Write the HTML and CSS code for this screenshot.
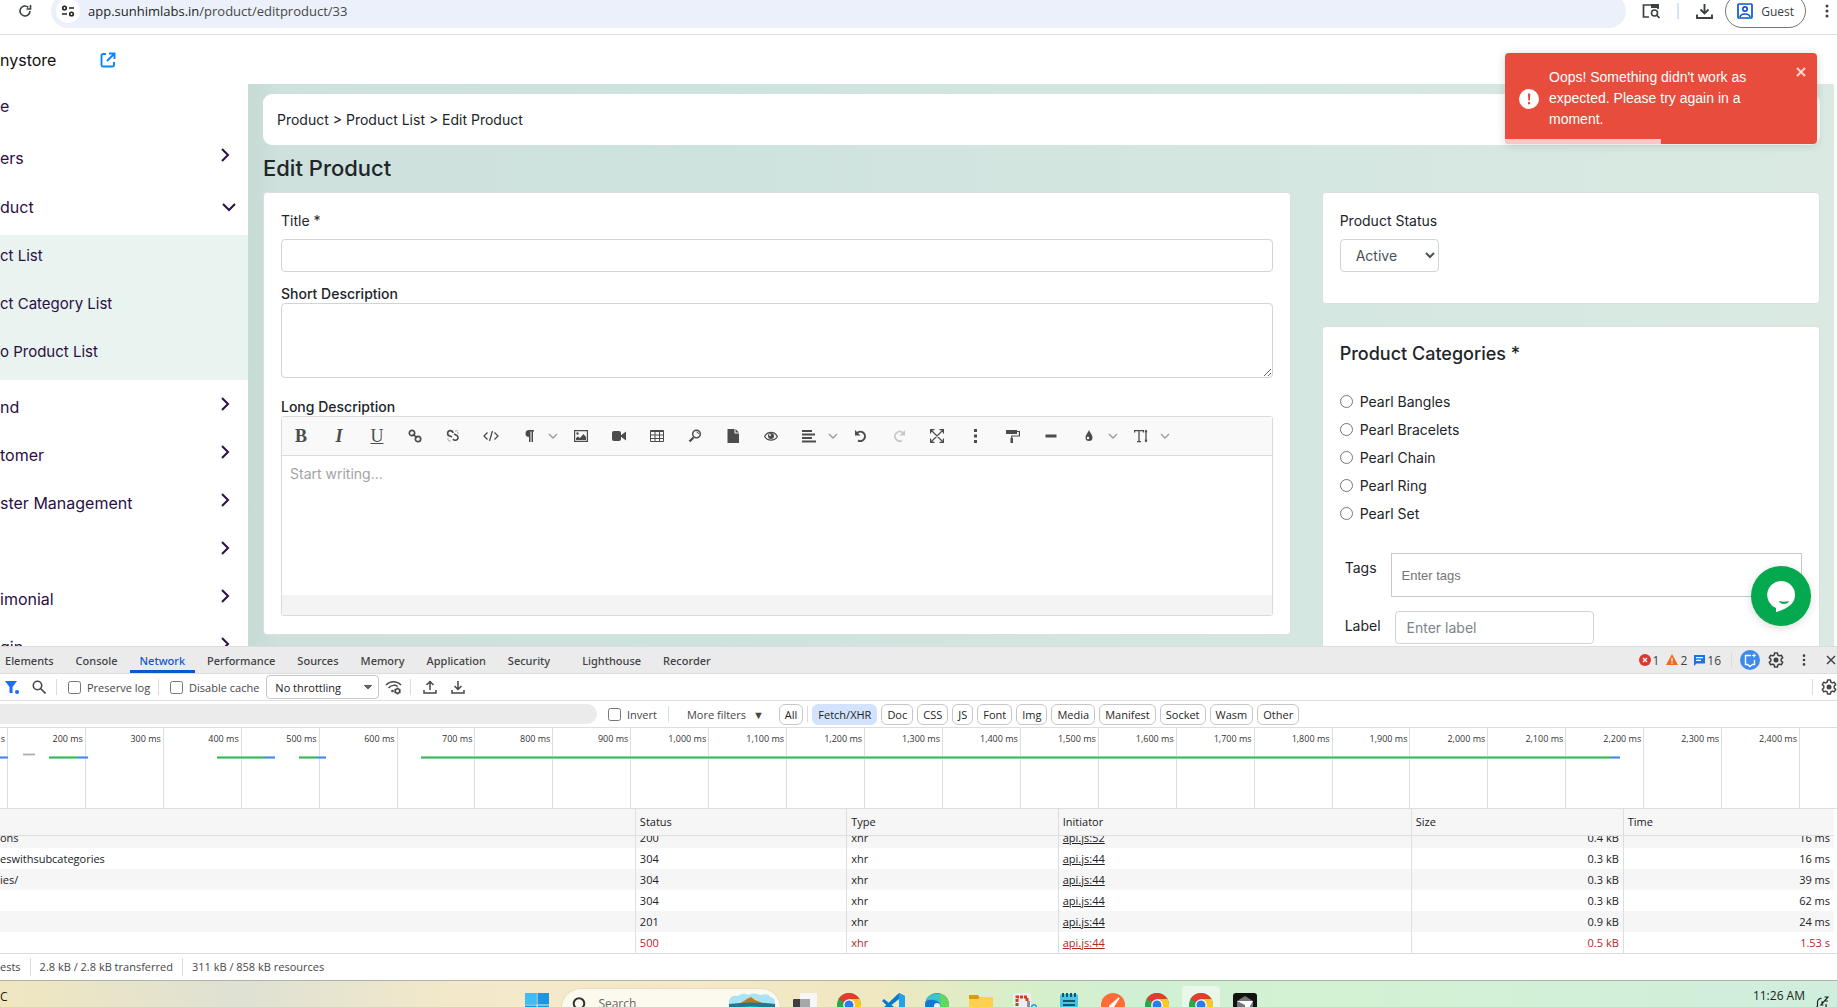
FILE: index.html
```
<!DOCTYPE html>
<html lang="en">
<head>
  <meta charset="UTF-8">
  <meta name="viewport" content="width=device-width, initial-scale=1.0">
  <title>Edit Product</title>
  <link rel="stylesheet" href="styles.css">
</head>
<body>
  <!-- Shared symbols -->
  <svg class="defs" aria-hidden="true">
    <symbol id="i-right" viewBox="0 0 10 14"><path d="M2 1l6 6-6 6" fill="none" stroke="currentColor" stroke-width="2"/></symbol>
    <symbol id="i-down" viewBox="0 0 14 10"><path d="M1 2l6 6 6-6" fill="none" stroke="currentColor" stroke-width="2"/></symbol>
    <symbol id="i-caret" viewBox="0 0 10 8"><path d="M1 2l4 4 4-4" fill="none" stroke="#999" stroke-width="1.3"/></symbol>
    <symbol id="i-dots" viewBox="0 0 16 16"><circle cx="8" cy="3" r="1.5"/><circle cx="8" cy="8" r="1.5"/><circle cx="8" cy="13" r="1.5"/></symbol>
    <symbol id="i-gear" viewBox="0 0 16 16"><path d="M6.6 1h2.8l.4 2 1.5.9 2-.7 1.4 2.4L13.200 7v2l1.500 1.400-1.400 2.400-2-.7-1.500.9-.4 2H6.600l-.4-2-1.500-.9-2 .7-1.400-2.400L2.800 9V7L1.300 5.600l1.400-2.400 2 .7L6.200 3z" fill="none" stroke="currentColor" stroke-width="1.500" stroke-linejoin="round"/><circle cx="8" cy="8" r="2.500"/></symbol>
    <symbol id="i-chrome" viewBox="0 0 24 24"><circle cx="12" cy="12" r="12" fill="#2da44e"/><path d="M12 12L1.600 6A12 12 0 0 1 22.400 6z" fill="#e33b2e"/><path d="M12 6h10.400A12 12 0 0 1 12 24z" fill="#fcc62a"/><circle cx="12" cy="12" r="5.800" fill="#fff"/><circle cx="12" cy="12" r="4.500" fill="#2b7bea"/></symbol>
  </svg>

  <div class="browser-bar">
    <button class="icon-btn reload" aria-label="Reload"><svg width="14" height="14" viewBox="0 0 14 14"><path d="M12 7a5 5 0 1 1-1.600-3.700M12.500 1v4h-4" fill="none" stroke="currentColor" stroke-width="1.600"/></svg></button>
    <div class="address">
      <span class="site-info"><svg width="14" height="14" viewBox="0 0 14 14" fill="none" stroke="currentColor" stroke-width="1.600"><circle cx="3.500" cy="4" r="1.800"/><path d="M8 4h5M1 10h5"/><circle cx="10.500" cy="10" r="1.800"/></svg></span>
      <span>app.sunhimlabs.in<span class="path">/product/editproduct/33</span></span>
    </div>
    <div class="browser-tools">
      <button class="icon-btn" aria-label="Search tabs"><svg width="18" height="16" viewBox="0 0 18 16"><path d="M7 14H1.500V2H16v4" fill="none" stroke="currentColor" stroke-width="1.700"/><path d="M9 1h8v4H9z"/><circle cx="12.500" cy="10" r="3" fill="none" stroke="currentColor" stroke-width="1.600"/><path d="M14.500 12l3 3" stroke="currentColor" stroke-width="1.700"/></svg></button>
      <span class="tool-divider"></span>
      <button class="icon-btn" aria-label="Downloads"><svg width="17" height="17" viewBox="0 0 17 17" fill="none" stroke="currentColor" stroke-width="1.900"><path d="M8.500 1v9M4.500 6.500l4 4 4-4M1 11.500V15h15v-3.500"/></svg></button>
      <button class="guest"><svg width="16" height="16" viewBox="0 0 16 16" fill="none" stroke="#0b57d0" stroke-width="1.700"><rect x="1" y="1" width="14" height="14" rx="1"/><circle cx="8" cy="6" r="2.200"/><path d="M3 14c1-4 9-4 10 0"/></svg>Guest</button>
      <button class="icon-btn" aria-label="Menu"><svg width="16" height="16"><use href="#i-dots"/></svg></button>
    </div>
  </div>

  <div class="app">
    <header class="app-header">
      <span class="store-name">nystore</span>
      <a href="#" aria-label="Open store"><svg width="16" height="16" viewBox="0 0 16 16" fill="none" stroke="#0d83fd" stroke-width="1.900"><path d="M6 2H3a1.500 1.500 0 0 0-1.500 1.500v9.500A1.500 1.500 0 0 0 3 14.500h9.500A1.500 1.500 0 0 0 14 13v-3M9 1.500h5.500V7M14 2L7 9"/></svg></a>
    </header>
    <div class="app-body">
      <nav class="sidebar">
        <a href="#" class="menu-item home">e</a>
        <a href="#" class="menu-item"><span>ers</span><svg width="10" height="14"><use href="#i-right"/></svg></a>
        <a href="#" class="menu-item open"><span>duct</span><svg width="14" height="10"><use href="#i-down"/></svg></a>
        <div class="submenu">
          <a href="#">ct List</a>
          <a href="#">ct Category List</a>
          <a href="#">o Product List</a>
        </div>
        <a href="#" class="menu-item"><span>nd</span><svg width="10" height="14"><use href="#i-right"/></svg></a>
        <a href="#" class="menu-item"><span>tomer</span><svg width="10" height="14"><use href="#i-right"/></svg></a>
        <a href="#" class="menu-item"><span>ster Management</span><svg width="10" height="14"><use href="#i-right"/></svg></a>
        <a href="#" class="menu-item"><span></span><svg width="10" height="14"><use href="#i-right"/></svg></a>
        <a href="#" class="menu-item"><span>imonial</span><svg width="10" height="14"><use href="#i-right"/></svg></a>
        <a href="#" class="menu-item"><span>gin</span><svg width="10" height="14"><use href="#i-right"/></svg></a>
      </nav>

      <main>
        <div class="breadcrumb">Product &gt; Product List &gt; Edit Product</div>
        <h1>Edit Product</h1>
        <div class="columns">
          <section class="card">
            <label class="field-label" for="title">Title *</label>
            <input class="text-input" type="text" id="title">
            <label class="desc-label" for="shortDesc">Short Description</label>
            <textarea id="shortDesc"></textarea>
            <label class="desc-label long" for="longDesc">Long Description</label>
            <div class="editor">
              <div class="editor-toolbar">
                <button class="glyph bold">B</button>
                <button class="glyph italic">I</button>
                <button class="glyph underline">U</button>
                <button aria-label="Link"><svg width="14" height="14" viewBox="0 0 14 14" fill="none" stroke="currentColor" stroke-width="1.700"><circle cx="4" cy="4" r="2.700"/><circle cx="10" cy="10" r="2.700"/><path d="M5 5l4 4"/></svg></button>
                <button aria-label="Unlink"><svg width="14" height="14" viewBox="0 0 14 14" fill="none" stroke="currentColor" stroke-width="1.600"><path d="M7 4a2.700 2.700 0 1 0-3 3l2 1M7 10a2.700 2.700 0 1 0 3-4L8 5"/><path d="M10 1v2M13 4h-2M1 10h2M4 13v-2M12 1l-1 1M2 12l1-1" stroke="#aaa" stroke-width="1"/></svg></button>
                <button aria-label="Code"><svg width="16" height="14" viewBox="0 0 16 14" fill="none" stroke="currentColor" stroke-width="1.300"><path d="M4.500 3.500L1 7l3.500 3.500M11.500 3.500L15 7l-3.500 3.500M9.500 2l-3 10"/></svg></button>
                <button class="drop" aria-label="Paragraph"><svg width="14" height="14" viewBox="0 0 14 14"><path d="M12 1v1.500h-1V13H9.500V2.500H8.500V13H7V8a3.500 3.500 0 0 1 0-7z"/></svg><svg width="10" height="8"><use href="#i-caret"/></svg></button>
                <button aria-label="Image"><svg width="14" height="14" viewBox="0 0 14 14"><path d="M.6 1.600h12.800v10.800H.6z" fill="none" stroke="currentColor" stroke-width="1.200"/><circle cx="3.500" cy="4.500" r="1.200"/><path d="M2 11V9l2-1.500L6 9l3.500-4L12 8v3z"/></svg></button>
                <button aria-label="Video"><svg width="14" height="14" viewBox="0 0 14 14"><rect y="2" width="9" height="10" rx="2"/><path d="M8 7l6-4.500v9z"/></svg></button>
                <button aria-label="Table"><svg width="14" height="14" viewBox="0 0 14 14" fill="none" stroke="currentColor"><path d="M.5 1.500h13v11H.5zM.5 2.500h13M.5 6h13M.5 9.500h13M5 2v10.500M9.500 2v10.500"/></svg></button>
                <button aria-label="Find"><svg width="14" height="14" viewBox="0 0 14 14" fill="none" stroke="currentColor"><circle cx="8.500" cy="5" r="3.800" stroke-width="1.500"/><path d="M5.500 8.500L1.500 12.500" stroke-width="2.300"/><path d="M8.500 3a2 2 0 0 1 2 2"/></svg></button>
                <button aria-label="File"><svg width="14" height="14" viewBox="0 0 14 14"><path d="M1.500 0h7v4.500h4.500V14H1.500zM9.500 0L13 3.500H9.500z"/></svg></button>
                <button aria-label="Preview"><svg width="14" height="14" viewBox="0 0 14 14"><path d="M.6 7.500C3.500 2 10.500 2 13.400 7.500 10.500 12.300 3.500 12.300.6 7.500z" fill="none" stroke="currentColor" stroke-width="1.200"/><circle cx="7" cy="7" r="3"/><circle cx="6" cy="6" r=".9" fill="#fff"/></svg></button>
                <button class="drop" aria-label="Align"><svg width="14" height="14" viewBox="0 0 14 14"><path d="M0 1h10v2H0zM0 4.500h13v2H0zM0 8h10v2H0zM0 11.500h14v2H0z"/></svg><svg width="10" height="8"><use href="#i-caret"/></svg></button>
                <button aria-label="Undo"><svg width="14" height="14" viewBox="0 0 14 14"><path d="M3 4a4.700 4.700 0 1 1 1 7.500" fill="none" stroke="currentColor" stroke-width="2"/><path d="M1 1v5.500h5.500z"/></svg></button>
                <button class="disabled" aria-label="Redo"><svg width="14" height="14" viewBox="0 0 14 14"><path d="M11 4a4.700 4.700 0 1 0-1 7.500" fill="none" stroke="currentColor" stroke-width="1.700"/><path d="M13 1v5.500H7.500z"/></svg></button>
                <button aria-label="Fullscreen"><svg width="14" height="14" viewBox="0 0 14 14" fill="none" stroke="currentColor" stroke-width="1.200"><path d="M.6 4.500V.6h3.900M9.500.6h3.900v3.900M13.400 9.500v3.900H9.500M4.500 13.400H.6V9.500M1 1l12 12M13 1L1 13"/></svg></button>
                <button aria-label="More"><svg width="14" height="14" viewBox="0 0 14 14"><path d="M6 0h3v3H6zM6 5.500h3v3H6zM6 11h3v3H6z"/></svg></button>
                <button aria-label="Copy format"><svg width="14" height="14" viewBox="0 0 14 14"><path d="M0 1h11v4H0zM4.500 9H7v5H4.500z"/><path d="M11 2.500h2.400V7H5.700v2" fill="none" stroke="currentColor" stroke-width="1.200"/></svg></button>
                <button aria-label="Line"><svg width="14" height="14" viewBox="0 0 14 14"><path d="M1.500 5.500h11v3h-11z"/></svg></button>
                <button class="drop" aria-label="Color"><svg width="14" height="14" viewBox="0 0 14 14"><path d="M7 1c1 3 3.500 4.500 3.500 7.500a3.500 3.500 0 0 1-7 0C3.500 5.500 6 4 7 1z"/><circle cx="6" cy="9" r="1.200" fill="#fff"/></svg><svg width="10" height="8"><use href="#i-caret"/></svg></button>
                <button class="drop" aria-label="Font size"><svg width="14" height="14" viewBox="0 0 14 14"><path d="M.6 3.500V1.600h8.800v1.900M5 1.600v11M3 12.600h4" fill="none" stroke="currentColor" stroke-width="1.300"/><path d="M12 1v12" stroke="currentColor" stroke-width="1.300"/><path d="M10.500 3.200L12 .5l1.500 2.700zM10.500 10.800l1.500 2.700 1.500-2.700z"/></svg><svg width="10" height="8"><use href="#i-caret"/></svg></button>
              </div>
              <textarea class="editor-area" id="longDesc" placeholder="Start writing..."></textarea>
              <div class="editor-status"></div>
            </div>
          </section>

          <div class="side-column">
            <section class="card status-card">
              <label class="field-label" for="status">Product Status</label>
              <select id="status"><option>Active</option><option>Inactive</option></select>
            </section>
            <section class="card">
              <h2>Product Categories *</h2>
              <div class="radio-list">
                <label><input type="radio" name="category">Pearl Bangles</label>
                <label><input type="radio" name="category">Pearl Bracelets</label>
                <label><input type="radio" name="category">Pearl Chain</label>
                <label><input type="radio" name="category">Pearl Ring</label>
                <label><input type="radio" name="category">Pearl Set</label>
              </div>
              <div class="form-row">
                <label for="tags">Tags</label>
                <input class="tags-input" type="text" id="tags" placeholder="Enter tags">
              </div>
              <div class="form-row">
                <label for="label">Label</label>
                <input class="text-input label-input" type="text" id="label" placeholder="Enter label">
              </div>
            </section>
          </div>
        </div>
      </main>
    </div>

    <div class="toast" role="alert">
      <svg width="20" height="20" viewBox="0 0 20 20"><circle cx="10" cy="10" r="10" fill="#fff"/><path d="M8.900 4.500h2.400l-.4 7H9.300zM9 13h2.200v2.200H9z" fill="#e74c3c"/></svg>
      <p>Oops! Something didn't work as expected. Please try again in a moment.</p>
      <button aria-label="Close"><svg width="10" height="10" viewBox="0 0 10 10"><path d="M1 1l8 8M9 1L1 9" stroke="#fbd5d0" stroke-width="2"/></svg></button>
      <span class="toast-progress"></span>
    </div>
    <button class="chat" aria-label="Chat"><svg width="60" height="60" viewBox="0 0 60 60"><path d="M30 15a14 14 0 0 1 14 14c0 9-8 14-19 17v-4A14 14 0 0 1 30 15z" fill="#fff"/><path d="M28 35c3 1 7 1 10 0-1 4-9 4-10 0z" fill="#04a84e"/></svg></button>
  </div>

  <section class="devtools">
    <div class="dt-tabs">
      <button>Elements</button>
      <button>Console</button>
      <button class="active">Network</button>
      <button>Performance</button>
      <button>Sources</button>
      <button>Memory</button>
      <button>Application</button>
      <button class="security">Security</button>
      <button>Lighthouse</button>
      <button>Recorder</button>
      <div class="dt-actions">
        <span class="count"><svg width="12" height="12" viewBox="0 0 12 12"><circle cx="6" cy="6" r="6" fill="#dc362e"/><path d="M4 4l4 4M8 4L4 8" stroke="#fff" stroke-width="1.300"/></svg>1</span>
        <span class="count"><svg width="12" height="12" viewBox="0 0 12 12"><path d="M6 0l6 11H0z" fill="#ec6c20"/><path d="M5.400 4h1.200v3.500H5.400zM5.400 8.500h1.200v1.200H5.400z" fill="#fff"/></svg>2</span>
        <span class="count"><svg width="11" height="11" viewBox="0 0 11 11"><path d="M0 0h11v8.500H2.500L0 11z" fill="#1a73e8"/><path d="M2 2.700h7M2 5.300h5" stroke="#fff" stroke-width="1.200"/></svg>16</span>
        <span class="dt-divider"></span>
        <svg class="ai" width="20" height="20" viewBox="0 0 20 20"><circle cx="10" cy="10" r="10" fill="#3c8bea"/><path d="M11 5.500H5.500v9h2l2.500 2 2.500-2h2V10" fill="none" stroke="#fff" stroke-width="1.400"/><path d="M14 3l.7 1.800 1.800.7-1.800.7L14 8l-.7-1.800-1.800-.7 1.800-.7z" fill="#fff"/></svg>
        <button class="icon-btn" aria-label="Settings"><svg width="16" height="16"><use href="#i-gear"/></svg></button>
        <button class="icon-btn menu" aria-label="More"><svg width="14" height="14"><use href="#i-dots"/></svg></button>
        <button class="icon-btn" aria-label="Close"><svg width="10" height="10" viewBox="0 0 10 10"><path d="M1 1l8 8M9 1L1 9" stroke="currentColor" stroke-width="1.500"/></svg></button>
      </div>
    </div>

    <div class="dt-row">
      <button class="icon-btn" aria-label="Filter"><svg width="14" height="14" viewBox="0 0 14 14" fill="#1a6ff0"><path d="M0 1h12L7.500 7v6h-3V7z"/><circle cx="12" cy="12" r="2"/></svg></button>
      <button class="icon-btn find" aria-label="Search"><svg width="14" height="14" viewBox="0 0 14 14" fill="none" stroke="currentColor" stroke-width="1.600"><circle cx="5.500" cy="5.500" r="4.200"/><path d="M8.500 8.500l5 5"/></svg></button>
      <span class="dt-divider"></span>
      <label class="check"><input type="checkbox">Preserve log</label>
      <span class="dt-divider"></span>
      <label class="check"><input type="checkbox">Disable cache</label>
      <select class="throttle" aria-label="Throttling"><option>No throttling</option></select>
      <button class="icon-btn" aria-label="Network conditions"><svg width="17" height="15" viewBox="0 0 17 15" fill="none" stroke="currentColor" stroke-width="1.500"><path d="M1 5c4-4.500 11-4.500 15 0M3.500 8c2.500-3 7-3.500 9-1.500"/><circle cx="12.500" cy="11" r="2.200"/><path d="M12.500 7.500v1M12.500 13.500v1M9.500 9.500l1 .5M14.500 12l1 .5M9.500 12.500l1-.5M14.500 10l1-.5"/><circle cx="7.500" cy="11" r=".6"/></svg></button>
      <span class="dt-divider"></span>
      <button class="icon-btn upload" aria-label="Import"><svg width="14" height="14" viewBox="0 0 14 14" fill="none" stroke="currentColor" stroke-width="1.500"><path d="M7 10V2M3.500 5L7 1.500 10.500 5M1 10v3h12v-3"/></svg></button>
      <button class="icon-btn" aria-label="Export"><svg width="14" height="14" viewBox="0 0 14 14" fill="none" stroke="currentColor" stroke-width="1.500"><path d="M7 1v8M3.500 6L7 9.500 10.500 6M1 10v3h12v-3"/></svg></button>
      <span class="dt-divider last"></span>
      <button class="icon-btn" aria-label="Network settings"><svg width="16" height="16"><use href="#i-gear"/></svg></button>
    </div>

    <div class="dt-row filters">
      <input class="filter-input" type="text" aria-label="Filter">
      <label class="check"><input type="checkbox">Invert</label>
      <span class="dt-divider"></span>
      <button class="more-filters">More filters <span>▼</span></button>
      <div class="chips">
        <button>All</button>
        <span class="dt-divider"></span>
        <button class="selected">Fetch/XHR</button>
        <button>Doc</button>
        <button>CSS</button>
        <button>JS</button>
        <button>Font</button>
        <button>Img</button>
        <button>Media</button>
        <button>Manifest</button>
        <button>Socket</button>
        <button>Wasm</button>
        <button>Other</button>
      </div>
    </div>

    <div class="timeline" id="timeline"></div>

    <div class="requests" id="requests">
      <table>
        <colgroup><col class="c-name"><col class="c-status"><col class="c-type"><col class="c-init"><col class="c-size"><col class="c-time"></colgroup>
        <thead>
          <tr><th></th><th>Status</th><th>Type</th><th>Initiator</th><th>Size</th><th>Time</th></tr>
        </thead>
        <tbody>
          <tr><td>ons</td><td>200</td><td>xhr</td><td><a href="#">api.js:52</a></td><td class="num">0.4 kB</td><td class="num">16 ms</td></tr>
          <tr><td>eswithsubcategories</td><td>304</td><td>xhr</td><td><a href="#">api.js:44</a></td><td class="num">0.3 kB</td><td class="num">16 ms</td></tr>
          <tr><td>ies/</td><td>304</td><td>xhr</td><td><a href="#">api.js:44</a></td><td class="num">0.3 kB</td><td class="num">39 ms</td></tr>
          <tr><td></td><td>304</td><td>xhr</td><td><a href="#">api.js:44</a></td><td class="num">0.3 kB</td><td class="num">62 ms</td></tr>
          <tr><td></td><td>201</td><td>xhr</td><td><a href="#">api.js:44</a></td><td class="num">0.9 kB</td><td class="num">24 ms</td></tr>
          <tr class="error"><td></td><td>500</td><td>xhr</td><td><a href="#">api.js:44</a></td><td class="num">0.5 kB</td><td class="num">1.53 s</td></tr>
        </tbody>
      </table>
    </div>

    <div class="dt-status">
      <span>ests</span>
      <span>2.8 kB / 2.8 kB transferred</span>
      <span>311 kB / 858 kB resources</span>
    </div>
  </section>

  <footer class="taskbar">
    <span class="weather">C</span>
    <div class="tasks">
      <svg width="24" height="24" viewBox="0 0 24 24"><path d="M0 0h11.500v11.500H0zM12.500 0H24v11.500H12.500zM0 12.500h11.500V24H0zM12.500 12.500H24V24H12.500z" fill="#1b95e4"/><path d="M0 0h11.500v11.500H0z" fill="#41bdf5"/></svg>
      <div class="task-search">
        <svg width="14" height="16" viewBox="0 0 14 16" fill="none" stroke="#333" stroke-width="2"><circle cx="7" cy="6.500" r="5.300"/><path d="M10 10.500l3.500 4"/></svg>
        <span>Search</span>
        <svg width="46" height="26" viewBox="0 0 46 26"><path d="M0 8q1-6 9-5 5-4 10-1 6-3 12 0 9-2 10 2 5 0 5 6v16H0z" fill="#a9e3f5"/><path d="M6 12h32L22 4z" fill="#f6d98a"/><path d="M10 11l8-5 4-2 4 3 10 4z" fill="#b8792c"/><path d="M0 11q22-3 46 0v15H0z" fill="#23788b"/><path d="M9 16q14-6 26 0v10H9z" fill="#16b4c4"/></svg>
      </div>
      <svg width="24" height="24" viewBox="0 0 24 24"><rect x="7" width="17" height="17" rx="1" fill="#f7f7f7"/><rect y="6" width="17" height="18" rx="1" fill="#3f3f3f"/><path d="M7 6h10v11H7z" fill="#a8a8a8"/></svg>
      <svg width="24" height="24"><use href="#i-chrome"/></svg>
      <svg width="24" height="24" viewBox="0 0 24 24"><path d="M18 0l6 3v18l-6 3L1 8l2-2 15 12V6L3 18l-2-2z" fill="#0a7bcb"/><path d="M18 0l6 3v18l-6 3z" fill="#24a1ee"/></svg>
      <svg width="24" height="24" viewBox="0 0 24 24"><circle cx="12" cy="12" r="12" fill="#1279cf"/><path d="M1 8C5-3 24-2 24 13c0 4-8 5-9 1 2-6-8-9-14-6z" fill="#3cc6c4"/><path d="M15 1c6 1 9 6 9 12 0 4-8 5-9 1 2-4 0-8 0-13z" fill="#65d65c"/><circle cx="12" cy="13" r="3" fill="#e3f5ee"/></svg>
      <svg width="24" height="24" viewBox="0 0 24 24"><path d="M0 2h9l2 3h13v19H0z" fill="#d99a0d"/><path d="M0 6h9l2-2h13v20H0z" fill="#fdd04f"/></svg>
      <svg width="24" height="24" viewBox="0 0 24 24"><rect width="18" height="24" rx="2" fill="#eceef2"/><path d="M4 13V4h10v5" fill="none" stroke="#d43c1c" stroke-width="3" stroke-dasharray="3 1"/><path d="M14 8h3v9h-3z" fill="#8a8f98"/><circle cx="16" cy="17" r="3" fill="#8a8f98"/><circle cx="21" cy="14" r="2.300" fill="none" stroke="#2ba3d8" stroke-width="1.600"/></svg>
      <svg width="24" height="24" viewBox="0 0 24 24"><rect x="3" y="1" width="18" height="23" rx="2" fill="#4cc3df"/><path d="M6 0v4M10 0v4M14 0v4M18 0v4M6 8h12M6 12h12" stroke="#0b5a78" stroke-width="2"/></svg>
      <svg width="24" height="24" viewBox="0 0 24 24"><circle cx="12" cy="12" r="12" fill="#ff6c37"/><path d="M18 5l-9 8-1 3 4-2z" fill="#fff" stroke="#fff" stroke-width="1.500"/></svg>
      <svg width="24" height="24"><use href="#i-chrome"/></svg>
      <span class="active-task"><svg width="24" height="24"><use href="#i-chrome"/></svg></span>
      <svg width="24" height="24" viewBox="0 0 24 24"><rect width="24" height="24" rx="3" fill="#14120f"/><path d="M12 3l8 5v9l-8 5-8-5V8z" fill="#777"/><path d="M4 8h16l-8 14V12z" fill="#fff"/></svg>
    </div>
    <div class="clock"><span>11:26 AM</span><svg width="14" height="14" viewBox="0 0 14 14" fill="none" stroke="#222" stroke-width="1.200"><path d="M1 12l1.500-2V6a3.500 3.500 0 0 1 4-3.500M9.500 1h3.500l-3.500 4H13M6 6h2.500L6 9h2.500M11 8v2l1 2H1"/></svg></div>
  </footer>

  <script>
    // Network overview: one column per 100 ms, bars as share of the width
    const timeline = document.getElementById('timeline');
    for (let i = 1; i <= 24; i++) {
      const col = document.createElement('span');
      col.className = 'tick';
      col.textContent = i === 1 ? 's' : (i * 100).toLocaleString('en-US') + ' ms';
      timeline.appendChild(col);
    }

    const bars = [
      ['blue', 0, 0.45], ['grey', 1.25, 0.65], ['green', 2.67, 1.6], ['blue', 4.27, 0.5],
      ['green', 11.82, 2.6], ['blue', 14.45, 0.5], ['green', 16.3, 0.95], ['blue', 17.25, 0.5],
      ['green', 22.9, 64.8], ['blue', 87.7, 0.5]
    ];
    bars.forEach(([color, left, width]) => {
      const bar = document.createElement('i');
      bar.className = 'bar ' + color;
      bar.style.left = left + '%';
      bar.style.width = width + '%';
      timeline.appendChild(bar);
    });

    // Keep the newest request in view
    const requests = document.getElementById('requests');
    requests.scrollTop = requests.scrollHeight;
  </script>
</body>
</html>
```
FILE: styles.css
```
* { margin: 0; padding: 0; box-sizing: border-box; }

body {
  height: 100vh;
  display: flex;
  flex-direction: column;
  overflow: hidden;
  font-family: Inter, sans-serif;
  font-size: 14px;
  color: #212529;
  background: #fff;
}

button, input, select, textarea {
  font: inherit;
  color: inherit;
}

button {
  border: none;
  background: none;
  cursor: pointer;
}

a {
  color: inherit;
  text-decoration: none;
}

svg {
  flex: none;
}

svg:not([fill]) {
  fill: currentColor;
}

.defs {
  position: absolute;
  width: 0;
  height: 0;
}

.icon-btn {
  display: flex;
  align-items: center;
}

/* Browser bar */
.browser-bar {
  flex: none;
  height: 35px;
  display: flex;
  padding-left: 18px;
  border-bottom: 1px solid #dcdfe3;
  font-family: "Open Sans", sans-serif;
  font-size: 13px;
  color: #3c4043;
}

.browser-bar .icon-btn {
  height: 22px;
}

.address {
  flex: 1;
  height: 34px;
  margin: -6px 16px 0 19px;
  padding-left: 5px;
  display: flex;
  align-items: center;
  gap: 8px;
  border-radius: 17px;
  background: #ebf0fa;
  color: #1f1f1f;
}

.address .path {
  color: #474747;
}

.site-info {
  width: 24px;
  height: 24px;
  display: flex;
  align-items: center;
  justify-content: center;
  border-radius: 50%;
  background: #fff;
}

.browser-tools {
  display: flex;
  padding-right: 2px;
}

.tool-divider {
  width: 2px;
  height: 16px;
  margin: 3px 17px;
  background: #d3e3fd;
}

.guest {
  display: flex;
  align-items: center;
  gap: 8px;
  height: 34px;
  margin: -6px 13px 0 12px;
  padding: 0 11px;
  border: 1px solid #747775;
  border-radius: 17px;
  font-size: 12px;
}

/* Store admin */
.app {
  position: relative;
  flex: 1;
  min-height: 0;
  display: flex;
  flex-direction: column;
  overflow: hidden;
}

.app-header {
  flex: none;
  height: 49px;
  display: flex;
  align-items: center;
  gap: 44px;
  font-size: 16px;
  color: #111;
}

.app-header a {
  display: flex;
}

.app-body {
  flex: 1;
  min-height: 0;
  display: flex;
  padding-right: 3px;
}

.sidebar {
  flex: none;
  width: 248px;
  font-size: 16px;
  color: #2b0f45;
}

.menu-item {
  height: 48px;
  display: flex;
  align-items: center;
  justify-content: space-between;
  padding-right: 18px;
}

.menu-item span {
  padding-top: 6px;
}

.menu-item.home {
  height: 47px;
  padding-bottom: 4px;
}

.menu-item.open {
  height: 56px;
  padding-right: 12px;
}

.menu-item.open span {
  padding-top: 0;
}

.submenu {
  background: #e9f3ef;
  padding-bottom: 1px;
  font-size: 15px;
}

.submenu a {
  display: block;
  height: 48px;
  line-height: 42px;
}

main {
  flex: 1;
  min-width: 0;
  padding: 10px 14px 0 15px;
  overflow: hidden;
  background: linear-gradient(90deg, #c6dad6, #cee1dc 2%, #cfe3de 30%, #daeae3);
}

.breadcrumb {
  height: 51px;
  line-height: 51px;
  padding: 0 14px;
  border-radius: 9px;
  background: #fff;
}

h1 {
  font-size: 22px;
  font-weight: 500;
  line-height: 47px;
}

.columns {
  display: grid;
  grid-template-columns: 1027fr 498fr;
  gap: 31px;
  align-items: start;
}

.card {
  padding: 18px 17px;
  border: 1px solid #dcdfdf;
  border-radius: 4px;
  background: #fff;
}

.side-column {
  display: flex;
  flex-direction: column;
  gap: 22px;
}

.status-card {
  padding-bottom: 31px;
}

.field-label {
  display: block;
  line-height: 20px;
  margin-bottom: 8px;
}

.text-input {
  width: 100%;
  height: 33px;
  padding: 0 11px;
  border: 1px solid #ced4da;
  border-radius: 4px;
}

::placeholder {
  color: #7c848b;
  opacity: 1;
}

.desc-label {
  display: block;
  margin-top: 12px;
  line-height: 19px;
  font-weight: 500;
}

.desc-label.long {
  margin-top: 19px;
}

#shortDesc {
  display: block;
  width: 100%;
  height: 75px;
  padding: 6px 11px;
  border: 1px solid #ced4da;
  border-radius: 4px;
}

.editor {
  border: 1px solid #dadada;
  border-radius: 3px;
}

.editor-toolbar {
  height: 39px;
  display: flex;
  align-items: center;
  border-bottom: 1px solid #dadada;
  background: #f9f9f9;
  color: #4c4c4c;
}

.editor-toolbar button {
  width: 38px;
  height: 38px;
  display: flex;
  align-items: center;
  justify-content: center;
}

.editor-toolbar .drop {
  width: 52px;
  gap: 12px;
  padding-left: 8px;
}

.editor-toolbar .glyph {
  font-family: "Liberation Serif", serif;
  font-size: 18px;
}

.editor-toolbar .bold { font-weight: 700; }
.editor-toolbar .italic { font-style: italic; font-weight: 700; }
.editor-toolbar .underline { text-decoration: underline; }
.editor-toolbar .disabled { color: #c8c8c8; }

.editor-area {
  display: block;
  width: 100%;
  height: 139px;
  padding: 9px 8px;
  border: none;
  resize: none;
}

.editor-area::placeholder {
  color: #a3a3a3;
}

.editor-status {
  height: 20px;
  background: #f4f4f4;
}

#status {
  width: 99px;
  height: 33px;
  padding-left: 11px;
  border: 1px solid #ced4da;
  border-radius: 4px;
  background: #fff;
  color: #495057;
}

h2 {
  font-size: 18px;
  font-weight: 500;
  line-height: 18px;
}

.radio-list {
  margin: 24px 0 26px;
}

.radio-list label {
  display: flex;
  align-items: center;
  gap: 7px;
  height: 28px;
}

.radio-list input {
  width: 13px;
  height: 13px;
}

.form-row {
  display: flex;
  gap: 14px;
  padding-left: 5px;
  margin-bottom: 14px;
}

.form-row label {
  line-height: 30px;
}

.tags-input {
  flex: 1;
  height: 44px;
  padding: 0 10px;
  border: 1px solid #c8c8c8;
  font-family: "Liberation Sans", sans-serif;
  font-size: 13px;
}

.tags-input::placeholder {
  color: #757575;
}

.label-input {
  width: 199px;
}

.toast {
  position: absolute;
  top: 18px;
  right: 20px;
  width: 312px;
  height: 91px;
  display: flex;
  align-items: center;
  gap: 10px;
  padding: 0 14px;
  border-radius: 4px;
  overflow: hidden;
  background: #e74c3c;
  box-shadow: 0 1px 10px rgba(0, 0, 0, 0.15);
  color: #fff;
  font-family: "Liberation Sans", sans-serif;
  font-size: 14px;
  line-height: 21px;
}

.toast p {
  flex: 1;
  margin-right: 20px;
}

.toast button {
  position: absolute;
  top: 9px;
  right: 11px;
}

.toast-progress {
  position: absolute;
  left: 0;
  bottom: 0;
  width: 50%;
  height: 5px;
  background: rgba(255, 255, 255, 0.7);
}

.chat {
  position: absolute;
  right: 26px;
  bottom: 20px;
  width: 60px;
  height: 60px;
  border-radius: 50%;
  background: #04a84e;
  box-shadow: 0 2px 8px rgba(0, 0, 0, 0.15);
}

/* DevTools */
.devtools {
  flex: none;
  border-top: 1px solid #dcdcdc;
  font-family: "Open Sans", sans-serif;
  font-size: 11px;
  color: #202124;
}

.dt-tabs {
  height: 27px;
  display: flex;
  border-bottom: 1px solid #dedede;
  background: #ebebeb;
  color: #3f4246;
}

.dt-tabs > button {
  margin-right: 2px;
  padding: 0 10px;
  font-family: "Noto Sans", sans-serif;
  font-weight: 500;
}

.dt-tabs > button:first-child {
  padding-left: 5px;
}

.dt-tabs .security {
  margin-right: 12px;
}

.dt-tabs .active {
  color: #0b57d0;
  box-shadow: inset 0 -3px #0b57d0;
}

.dt-actions {
  display: flex;
  align-items: center;
  margin-left: auto;
  padding-right: 1px;
}

.count {
  display: flex;
  align-items: center;
  gap: 2px;
  margin-right: 7px;
  font-size: 12px;
}

.dt-divider {
  width: 1px;
  height: 16px;
  margin: 0 8px;
  background: #dadce0;
}

.dt-actions .dt-divider {
  margin: 0 8px 0 3px;
}

.ai {
  margin-right: 8px;
}

.dt-actions .menu {
  margin: 0 15px 0 13px;
}

.dt-row {
  height: 27px;
  display: flex;
  align-items: center;
  padding-left: 5px;
  border-bottom: 1px solid #dedede;
  color: #474747;
  overflow: hidden;
}

.find {
  margin: 0 2px 0 13px;
}

.check {
  display: flex;
  align-items: center;
  gap: 6px;
  margin-left: 3px;
}

.check input {
  width: 13px;
  height: 13px;
}

.throttle {
  width: 113px;
  height: 24px;
  margin: 0 6px 0 7px;
  padding-left: 8px;
  appearance: none;
  border: 1px solid #c7c7c7;
  border-radius: 4px;
  color: #202124;
  background: conic-gradient(from -45deg at 50% 100%, #5f6368 90deg, transparent 0) right 6px top 9px / 8px 4px no-repeat;
}

.upload {
  margin: 0 14px 0 4px;
}

.dt-divider.last {
  margin-left: auto;
}

.filters {
  padding-left: 0;
}

.filter-input {
  width: 597px;
  height: 20px;
  margin-right: 8px;
  padding: 0 10px;
  border: none;
  border-radius: 0 10px 10px 0;
  background: #ebebeb;
}

.filters > .dt-divider {
  margin: 0 18px 0 11px;
}

.more-filters span {
  margin-left: 4px;
}

.chips {
  display: flex;
  align-items: center;
  gap: 4px;
  margin-left: 15px;
}

.chips button {
  height: 21px;
  padding: 0 5px;
  border: 1px solid #c7c7c7;
  border-radius: 6px;
  color: #1f1f1f;
  font-weight: 500;
}

.chips .dt-divider {
  margin: 0;
}

.chips .selected {
  border-color: #d3e3fd;
  background: #d3e3fd;
}

.timeline {
  position: relative;
  height: 80px;
  display: grid;
  grid-template-columns: 8px repeat(23, 1fr);
  padding-right: 37px;
}

.tick {
  padding: 4px 2px 0 0;
  border-right: 1px solid #dedede;
  font-size: 9px;
  text-align: right;
  white-space: nowrap;
  color: #333;
}

.bar {
  position: absolute;
  top: 28px;
  height: 3px;
}

.bar.green { background: linear-gradient(#84d89a 1px, #3bb85d 1px 2px, #84d89a 2px); }
.bar.blue { background: linear-gradient(#94b8f8 1px, #4d87ee 1px 2px, #94b8f8 2px); }
.bar.grey { top: 25px; background: linear-gradient(#ddd 1px, #b0b0b0 1px 2px, #ddd 2px); }

.requests {
  height: 145px;
  padding-right: 3px;
  overflow: hidden;
  border-top: 1px solid #dedede;
}

table {
  width: 100%;
  table-layout: fixed;
  border-spacing: 0;
}

.c-name { width: 34.67%; }
.c-status, .c-type { width: 11.53%; }
.c-init { width: 19.25%; }
.c-size { width: 11.56%; }

th, td {
  height: 21px;
  padding: 0 4px;
  border-right: 1px solid #dedede;
  line-height: 20px;
  text-align: left;
}

th:first-child, td:first-child {
  padding-left: 0;
}

th:last-child, td:last-child {
  border-right: none;
}

th {
  position: sticky;
  top: 0;
  height: 27px;
  border-bottom: 1px solid #dedede;
  font-weight: 400;
  background: #f6f6f6;
}

tbody tr:nth-child(odd) {
  background: #f6f6f6;
}

td a {
  text-decoration: underline;
}

td.num {
  text-align: right;
}

.error {
  color: #b3261e;
}

.dt-status {
  height: 27px;
  display: flex;
  align-items: center;
  border-top: 1px solid #dedede;
  color: #474747;
}

.dt-status span {
  line-height: 18px;
  padding-right: 9px;
  margin-right: 9px;
  border-right: 1px solid #dadce0;
}

.dt-status span:last-child {
  border-right: none;
}

/* Windows taskbar */
.taskbar {
  flex: none;
  height: 27px;
  display: flex;
  border-top: 1px solid #aab5a8;
  overflow: hidden;
  background: linear-gradient(90deg, #f0e7c0, #dfe1d3 13%, #f3e9ca 25%, #f6e8c8 38%, #efe8c0 48%, #d8efc8 55%, #d0f0d4 62%, #d3f2d3 72%, #cfeedd);
  font-family: "Open Sans", sans-serif;
  font-size: 12px;
  color: #222;
}

.weather {
  width: 28.6%;
  padding-top: 7px;
}

.tasks {
  flex: 1;
  display: flex;
  gap: 20px;
  padding-top: 12px;
}

.task-search {
  width: 218px;
  height: 38px;
  display: flex;
  gap: 12px;
  margin: -4px -7px 0 -7px;
  padding: 4px 5px 0 10px;
  border-radius: 19px;
  background: #fcf9ee;
  box-shadow: 0 0 0 1px #e8dfc0;
  color: #666;
}

.task-search span {
  flex: 1;
  padding-top: 2px;
}

.task-search svg:first-child {
  margin: 4px 0 0;
}

.active-task {
  height: 40px;
  margin: -7px -7px 0;
  padding: 7px;
  border-radius: 4px 4px 0 0;
  background: #e9f7e8;
}

.clock {
  display: flex;
  gap: 10px;
  padding: 6px 8px 0 0;
}

.clock svg {
  margin-top: 9px;
}
```
